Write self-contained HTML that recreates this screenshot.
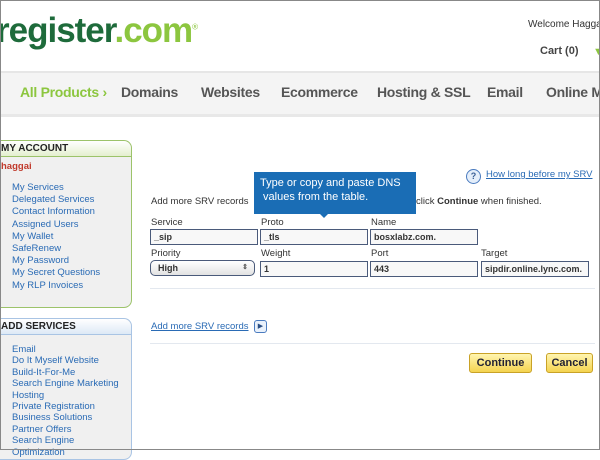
<!DOCTYPE html>
<html><head><style>
body{margin:0;width:600px;height:450px;overflow:hidden;background:#fff;font-family:"Liberation Sans",sans-serif;position:relative}
.a{position:absolute;white-space:nowrap}
.frame{position:absolute;left:0;top:0;width:598px;height:448px;border:1px solid #888;pointer-events:none}
.nav{left:0;top:71px;width:600px;height:41px;background:#f4f4f4;border-top:2px solid #e6e6e6;border-bottom:3px solid #e8e8e8;overflow:hidden}
.nav span{position:absolute;top:11px;font-size:14px;font-weight:bold;color:#555;letter-spacing:-.3px;white-space:nowrap}
.box{left:-10px;width:140px;background:#f0f0f0;border-radius:0 8px 8px 0}
.box .h{height:15px;font-size:10px;font-weight:bold;color:#222;padding-left:10px;line-height:16px;border-radius:0 8px 0 0}
.lk{font-size:9.5px;color:#2a6bb5;line-height:12.2px}
.lb{font-size:9.5px;color:#333}
.in{height:14px;border:1px solid #4a5a7a;background:#f8f8f8;font-size:9px;font-weight:bold;color:#333;line-height:14px;padding-left:3px;box-sizing:content-box}
.btn{height:18px;border:1px solid #c9a227;border-radius:3px;background:linear-gradient(#fff5b0,#f4d350);font-size:11px;font-weight:bold;color:#223;text-align:center;line-height:18px}
</style></head><body>
<div class="a" style="left:-4px;top:11px;font-size:35px;font-weight:bold;letter-spacing:-1px;color:#1e6b3b">register<span style="color:#8cc63f">.com</span><sup style="font-size:8px;color:#8cc63f;font-weight:normal">®</sup></div>
<div class="a" style="left:528px;top:19px;font-size:10px;color:#333">Welcome Haggai</div>
<div class="a" style="left:540px;top:45px;font-size:11px;font-weight:bold;color:#444">Cart (0)</div>
<div class="a" style="left:593px;top:46px;font-size:11px;color:#8cc63f">▼</div>
<div class="a nav">
<span style="left:20px;color:#8cc63f">All Products ›</span>
<span style="left:121px">Domains</span>
<span style="left:201px">Websites</span>
<span style="left:281px">Ecommerce</span>
<span style="left:377px">Hosting &amp; SSL</span>
<span style="left:487px">Email</span>
<span style="left:546px">Online Marketing</span>
</div>
<div class="a box" style="top:140px;height:166px;border:1px solid #9cc36a">
<div class="h" style="background:linear-gradient(#fff,#e4efcf);border-bottom:1px solid #9cc36a">MY ACCOUNT</div>
<div style="padding:4px 0 0 10px;font-size:9.5px;font-weight:bold;color:#c0392b">haggai</div>
<div class="lk" style="padding:10px 0 0 21px">My Services<br>Delegated Services<br>Contact Information<br>Assigned Users<br>My Wallet<br>SafeRenew<br>My Password<br>My Secret Questions<br>My RLP Invoices</div>
</div>
<div class="a box" style="top:318px;height:140px;border:1px solid #a9c4e4">
<div class="h" style="background:linear-gradient(#fff,#dde9f6);border-bottom:1px solid #a9c4e4">ADD SERVICES</div>
<div class="lk" style="padding:9px 0 0 21px;line-height:11.4px">Email<br>Do It Myself Website<br>Build-It-For-Me<br>Search Engine Marketing<br>Hosting<br>Private Registration<br>Business Solutions<br>Partner Offers<br>Search Engine<br>Optimization</div>
</div>
<div class="a" style="left:466px;top:169px;width:13px;height:13px;border:1px solid #4a7bbf;border-radius:50%;background:#e4eefa;font-size:9px;font-weight:bold;color:#3a5f95;text-align:center;line-height:13px">?</div>
<div class="a lk" style="left:486px;top:169px;text-decoration:underline">How long before my SRV</div>
<div class="a lb" style="left:151px;top:196px">Add more SRV records</div>
<div class="a lb" style="left:416px;top:196px">click <b>Continue</b> when finished.</div>
<div class="a" style="left:254px;top:172px;width:162px;height:42px;background:#1a6db5;color:#fff;font-size:11px;line-height:13.5px;padding:5px 0 0 6px;box-sizing:border-box">Type or copy and paste DNS<br>&nbsp;values from the table.</div>
<div class="a" style="left:320px;top:214px;width:0;height:0;border-left:4px solid transparent;border-right:4px solid transparent;border-top:4px solid #1a6db5"></div>
<div class="a lb" style="left:151px;top:217px">Service</div>
<div class="a lb" style="left:261px;top:217px">Proto</div>
<div class="a lb" style="left:371px;top:217px">Name</div>
<div class="a in" style="left:150px;top:229px;width:103px">_sip</div>
<div class="a in" style="left:260px;top:229px;width:103px">_tls</div>
<div class="a in" style="left:370px;top:229px;width:103px">bosxlabz.com.</div>
<div class="a lb" style="left:151px;top:248px">Priority</div>
<div class="a lb" style="left:261px;top:248px">Weight</div>
<div class="a lb" style="left:371px;top:248px">Port</div>
<div class="a lb" style="left:481px;top:248px">Target</div>
<div class="a in" style="left:150px;top:260px;width:96px;border-radius:5px;background:linear-gradient(#fff,#e2e2e2);padding-left:7px">High<span style="position:absolute;right:6px;font-size:7px;color:#555">⇕</span></div>
<div class="a in" style="left:260px;top:261px;width:103px">1</div>
<div class="a in" style="left:370px;top:261px;width:103px">443</div>
<div class="a in" style="left:481px;top:261px;width:103px">sipdir.online.lync.com.</div>
<div class="a" style="left:150px;top:288px;width:445px;height:1px;background:#e3e8ef"></div>
<div class="a lk" style="left:151px;top:321px;text-decoration:underline">Add more SRV records</div>
<div class="a" style="left:254px;top:320px;width:11px;height:11px;border:1px solid #4a7bbf;border-radius:3px;background:#e9f1fb;font-size:7px;color:#2a4f85;text-align:center;line-height:11px">▶</div>
<div class="a" style="left:150px;top:343px;width:445px;height:1px;background:#e3e8ef"></div>
<div class="a btn" style="left:469px;top:353px;width:61px">Continue</div>
<div class="a btn" style="left:546px;top:353px;width:45px">Cancel</div>
<div class="frame"></div>
</body></html>
